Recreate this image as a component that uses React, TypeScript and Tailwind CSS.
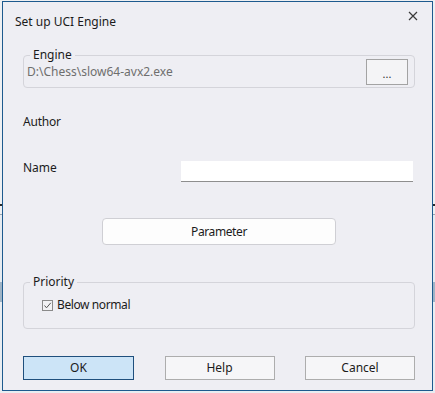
import type { ReactNode } from 'react';

const font = { fontFamily: '"Noto Sans", "Open Sans", Arial, sans-serif' };

const GroupBox = ({ title, children, className }: { title: string; children: ReactNode; className?: string }) => (
  <fieldset className={`rounded-[4px] border border-[#d4d4da] pl-[3px] ${className ?? ''}`}>
    <legend className="ml-[3px] px-[3px] text-[12px] leading-[16px] text-[#1b1b1b]">{title}</legend>
    {children}
  </fieldset>
);

const DlgButton = ({ label, primary }: { label: string; primary?: boolean }) => (
  <button
    className={
      primary
        ? 'h-[24px] w-[111px] border border-[#1f4f7d] bg-[#cce4f7] text-[12px] text-[#1b1b1b]'
        : 'h-[24px] w-[110px] border border-[#adadad] bg-[#f6f6f8] text-[12px] text-[#1b1b1b]'
    }
  >
    {label}
  </button>
);

const CloseIcon = () => (
  <svg width="10" height="10" viewBox="0 0 10 10" className="text-[#3a3a3a]">
    <path d="M1 1 L9 9 M9 1 L1 9" stroke="currentColor" strokeWidth="1.2" />
  </svg>
);

const App = () => {
  return (
    <div
      className="h-[393px] w-[435px] pb-[2px] pl-[2px] pr-[2px] pt-[1px] bg-[linear-gradient(to_bottom,#eef0f2_0px,#eef0f2_204px,#2a2a2a_204px,#2a2a2a_206px,#eef0f2_206px,#eef0f2_214px,#9aa4ae_214px,#9aa4ae_215px,#e6ebf0_215px,#e6ebf0_282px,#9fb4c6_282px,#9fb4c6_302px,#e9edf1_302px)]"
      style={font}
    >
      <div className="flex h-full flex-col border border-[#1d5a8e] bg-[#eeeef3] pl-[20px] pr-[17px] text-[#1b1b1b]">
        <div className="-ml-[8px] -mr-[9px] flex h-[40px] items-center justify-between">
          <span className="text-[12px]">Set up UCI Engine</span>
          <span className="mb-[13px] mr-[6px]">
            <CloseIcon />
          </span>
        </div>

        <GroupBox title="Engine" className="mt-[5px] pb-[2px] pr-[6px]">
          <div className="-mt-[4px] flex h-[26px] items-center justify-between">
            <span className="text-[12px] text-[#6e6e6e]">D:\Chess\slow64-avx2.exe</span>
            <button className="h-[26px] w-[42px] border border-[#a3a3a3] bg-[#f4f4f6] pt-[3px] text-[11px] leading-[14px] text-[#333]">
              ...
            </button>
          </div>
        </GroupBox>

        <div className="mt-[26px] text-[12px] leading-[16px] tracking-[-0.2px]">Author</div>

        <div className="mt-[30px] flex items-start">
          <span className="w-[158px] text-[12px] leading-[16px]">Name</span>
          <input className="mt-[1px] h-[21px] w-[232px] border-b border-[#8e8e8e] bg-white outline-none" />
        </div>

        <button className="mx-auto mt-[36px] h-[27px] w-[234px] rounded-[4px] border border-[#cfcfd4] bg-[#fdfdfd] text-[12px] tracking-[-0.4px]">
          Parameter
        </button>

        <GroupBox title="Priority" className="mt-[29px] pb-[15px]">
          <label className="ml-[15px] mt-[7px] flex h-[16px] items-center gap-[4px] text-[12px] tracking-[-0.4px]">
            <span className="flex h-[11px] w-[11px] items-center justify-center border border-[#8a8a8a] bg-[#f2f2f4]">
              <svg width="9" height="9" viewBox="0 0 9 9">
                <path d="M1.5 4.5 L3.5 6.8 L7.8 1.8" stroke="#555" strokeWidth="1" fill="none" />
              </svg>
            </span>
            Below normal
          </label>
        </GroupBox>

        <div className="mt-[27px] flex justify-between">
          <DlgButton label="OK" primary />
          <DlgButton label="Help" />
          <DlgButton label="Cancel" />
        </div>
      </div>
    </div>
  );
};

export default App;
